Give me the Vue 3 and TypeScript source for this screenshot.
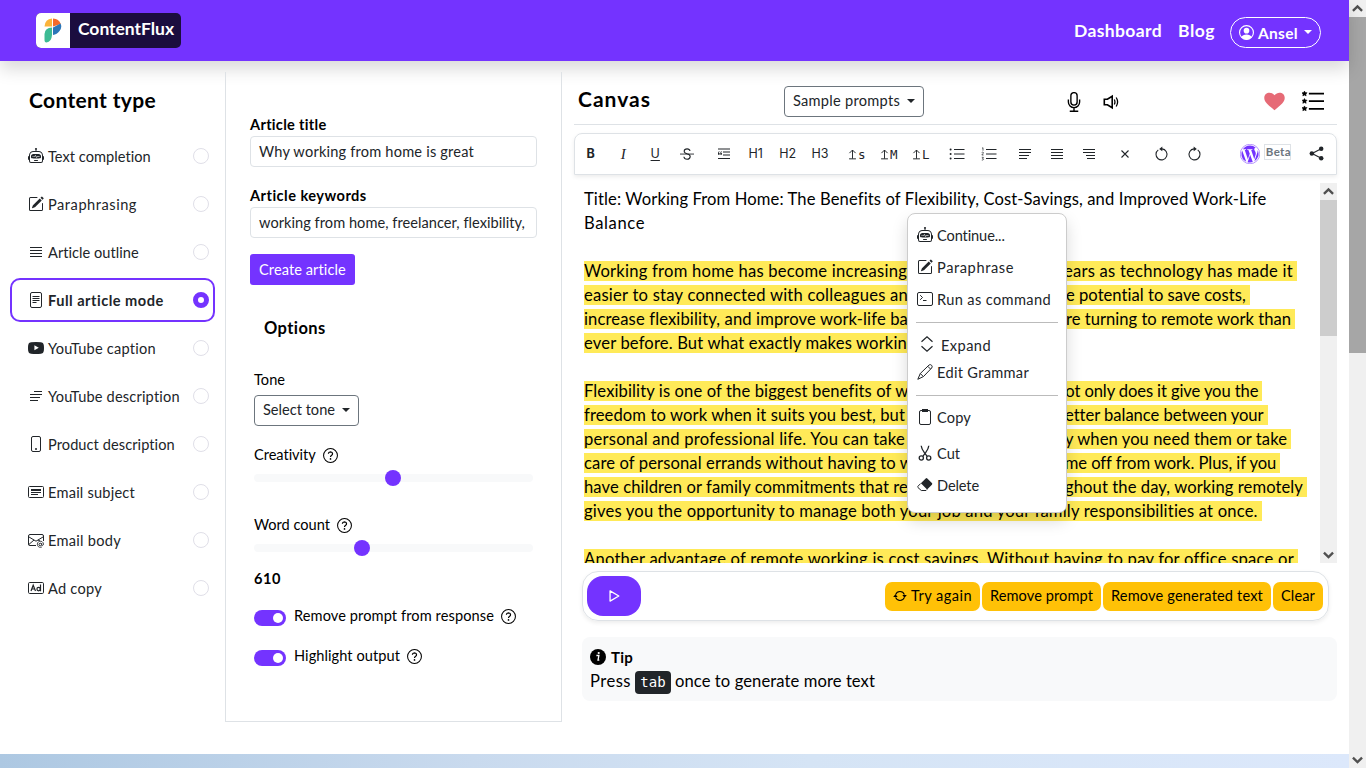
<script setup lang="ts">
import { h } from 'vue'
import type { Directive, FunctionalComponent } from 'vue'

/* Inner markup of every 16-unit icon. */
const icons: Record<string, string> = {
  robot:
    '<path d="M6 12.5a.5.5 0 0 1 .5-.5h3a.5.5 0 0 1 0 1h-3a.5.5 0 0 1-.5-.5ZM3 8.062C3 6.76 4.235 5.765 5.53 5.886a26.58 26.58 0 0 0 4.94 0C11.765 5.765 13 6.76 13 8.062v1.157a.933.933 0 0 1-.765.935c-.845.147-2.34.346-4.235.346-1.895 0-3.39-.2-4.235-.346A.933.933 0 0 1 3 9.219V8.062Zm4.542-.827a.25.25 0 0 0-.217.068l-.92.9a24.767 24.767 0 0 1-1.871-.183.25.25 0 0 0-.068.495c.55.076 1.232.149 2.02.193a.25.25 0 0 0 .189-.071l.754-.736.847 1.71a.25.25 0 0 0 .404.062l.932-.97a25.286 25.286 0 0 0 1.922-.188.25.25 0 0 0-.068-.495c-.538.074-1.207.145-1.98.189a.25.25 0 0 0-.166.076l-.754.785-.842-1.7a.25.25 0 0 0-.182-.135Z"/><path d="M8.5 1.866a1 1 0 1 0-1 0V3h-2A4.5 4.5 0 0 0 1 7.5V8a1 1 0 0 0-1 1v2a1 1 0 0 0 1 1v1a2 2 0 0 0 2 2h10a2 2 0 0 0 2-2v-1a1 1 0 0 0 1-1V9a1 1 0 0 0-1-1v-.5A4.5 4.5 0 0 0 10.5 3h-2V1.866ZM14 7.5V13a1 1 0 0 1-1 1H3a1 1 0 0 1-1-1V7.5A3.5 3.5 0 0 1 5.5 4h5A3.5 3.5 0 0 1 14 7.5Z"/>',
  edit:
    '<path d="M15.502 1.94a.5.5 0 0 1 0 .706L14.459 3.69l-2-2L13.502.646a.5.5 0 0 1 .707 0l1.293 1.293zm-1.75 2.456-2-2L4.939 9.21a.5.5 0 0 0-.121.196l-.805 2.414a.25.25 0 0 0 .316.316l2.414-.805a.5.5 0 0 0 .196-.12l6.813-6.814z"/><path d="M1 13.5A1.5 1.5 0 0 0 2.5 15h11a1.5 1.5 0 0 0 1.5-1.5v-6a.5.5 0 0 0-1 0v6a.5.5 0 0 1-.5.5h-11a.5.5 0 0 1-.5-.5v-11a.5.5 0 0 1 .5-.5H9a.5.5 0 0 0 0-1H2.5A1.5 1.5 0 0 0 1 2.5v11z"/>',
  justify: '<path d="M2 3h12v1H2zM2 6h12v1H2zM2 9h12v1H2zM2 12h12v1H2z"/>',
  left: '<path d="M2 3h12v1H2zM2 6h12v1H2zM2 9h10v1H2zM2 12h8v1H2z"/>',
  right: '<path d="M2 3h12v1H2zM2 6h12v1H2zM5 9h9v1H5zM6 12h8v1H6z"/>',
  para: '<path d="M6 3h8v1H6zM2 6h12v1H2zM2 9h10v1H2zM2 12h8v1H2z"/>',
  file:
    '<rect x="2.5" y=".5" width="11" height="15" rx="1.5" fill="none" stroke="currentColor"/><path d="M4.5 4h7v1h-7zM4.5 6h7v1h-7zM4.5 8h7v1h-7zM4.5 10h4v1h-4z"/>',
  youtube:
    '<path fill-rule="evenodd" d="M3 2.2Q8 1.7 13 2.2Q15.6 2.4 15.8 5Q16.2 8 15.8 11Q15.6 13.6 13 13.8Q8 14.3 3 13.8Q.4 13.6.2 11Q-.2 8 .2 5Q.4 2.4 3 2.2ZM6.4 5.2v5.1L10.8 7.8Z"/>',
  phone: '<rect x="3.5" y=".5" width="9" height="15" rx="1.5" fill="none" stroke="currentColor"/><circle cx="8" cy="13" r="1"/>',
  card: '<rect x=".5" y="2.5" width="15" height="11" rx="1" fill="none" stroke="currentColor"/><path d="M3 5h10v2H3zM3 8h10v1H3zM3 10h7v1H3z"/>',
  mail:
    '<g fill="none" stroke="currentColor"><path d="M8 13.5H2A1.5 1.5 0 0 1 .5 12V4A1.5 1.5 0 0 1 2 2.5h12A1.5 1.5 0 0 1 15.5 4v5M.5 4.7L8 9.2l7.5-4.5M.5 12.8L6 8M10 8l2 1"/><circle cx="12.3" cy="12.5" r="1.3"/><path d="M13.7 11v1.6q.1 1.2 1 .9q.8-.4.8-1.5a3.1 3.1 0 1 0-1.6 3" stroke-width=".8"/></g>',
  ad: '<rect x=".5" y="2.5" width="15" height="11" rx="1.2" fill="none" stroke="currentColor"/><g fill="none" stroke="currentColor" stroke-width="1.2"><path d="M3 11L5.2 5.2L7.5 11M3.7 9h3"/><circle cx="10.6" cy="9.1" r="1.7"/><path d="M12.5 4.5V11.3"/></g>',
  help:
    '<circle cx="8" cy="8" r="7.4" fill="none" stroke="currentColor" stroke-width="1.1"/><path d="M5.7 6.1Q5.8 4.2 8 4.1Q10.2 4.2 10.2 6Q10.2 7 8.9 7.9Q8 8.5 8 9.7" fill="none" stroke="currentColor" stroke-width="1.3"/><circle cx="8" cy="11.6" r=".9"/>',
  person:
    '<circle cx="8" cy="8" r="7.4" fill="none" stroke="currentColor" stroke-width="1.2"/><circle cx="8" cy="6" r="3"/><path d="M2.4 13Q4 10 8 10T13.6 13Q11 15.6 8 15.6T2.4 13Z"/>',
  mic: '<g fill="none" stroke="currentColor" stroke-width="1.1"><rect x="5.5" y=".5" width="5" height="10" rx="2.5"/><path d="M3.500 6v2a4.500 4.500 0 0 0 9 0V6M8 12.500v3M4.600 15.400h6.800"/></g>',
  sound: '<g fill="none" stroke="currentColor" stroke-width="1.6"><path d="M1.300 5.200h3.100L9.200 2.200v11.600L4.400 10.800H1.300z"/><path d="M11.300 5.500Q12.600 8 11.300 10.500M13.200 3.500Q16 8 13.200 12.500" stroke-width="1.300"/></g>',
  heart: '<path d="M8 14.600C6 12.600.2 9.300.2 5.300C.2 1 5.500-.1 8 3.300C10.500-.1 15.800 1 15.800 5.300C15.800 9.300 10 12.600 8 14.600Z"/>',
  starlist:
    '<path d="M5 2h11v1.300H5zM5 7.500h11v1.300H5zM5 13h11v1.300H5z"/><path d="M1.800.8l.6 1.1 1.300.1-.9 1 .2 1.300-1.200-.6-1.200.6.2-1.300-.9-1 1.300-.1zM1.800 6.200l.6 1.100 1.300.1-.9 1 .2 1.300-1.200-.6-1.200.6.2-1.300-.9-1 1.300-.1zM1.800 11.600l.6 1.100 1.300.1-.9 1 .2 1.300-1.200-.6-1.200.6.2-1.300-.9-1 1.300-.1z" stroke="currentColor" stroke-width=".4"/>',
  quote: '<path d="M2 2.500h12v1H2zM7 5.500h7v1H7zM7 8.500h7v1H7zM2 12h12v1H2z"/><path d="M2 8.800V7q.1-1.600 1.500-1.700v.7q-.7.1-.7 1h.8v1.800zM4.300 8.800V7q.1-1.600 1.500-1.700v.7q-.7.1-.7 1h.8v1.800z"/>',
  ul: '<path d="M5 3h10.500v1H5zM5 7.500h10.500v1H5zM5 12h10.500v1H5z"/><circle cx="1.600" cy="3.500" r="1"/><circle cx="1.600" cy="8" r="1"/><circle cx="1.600" cy="12.500" r="1"/>',
  ol: '<path d="M5 3h10.500v1H5zM5 7.500h10.500v1H5zM5 12h10.500v1H5z"/><path d="M1 2.300l1-.6v3M.7 6.500q1.400-1 1.700.1Q2.400 7.300.8 9h1.800M.8 11.300h1.600l-.9 1.100q1 0 1 .9t-1.700.8" fill="none" stroke="currentColor" stroke-width=".7"/>',
  close: '<path d="M4.500 4.500l7 7M11.500 4.500l-7 7" stroke="currentColor" stroke-width="1.100"/>',
  undo: '<path d="M4.300 3.900A5.500 5.500 0 1 0 8 2.900" fill="none" stroke="currentColor" stroke-width="1.100"/><path d="M8.300.5v4.800L5.200 2.900z"/>',
  redo: '<path d="M11.700 3.900A5.500 5.500 0 1 1 8 2.900" fill="none" stroke="currentColor" stroke-width="1.100"/><path d="M7.700.5v4.800L10.800 2.900z"/>',
  strike: '<path d="M1 7.600h14v.9H1z"/><path d="M11 5Q10.700 2.900 8.100 2.900Q5.300 2.900 5.200 5.200Q5.200 6.900 8 7.700Q11.200 8.500 11.200 10.600Q11 13.200 8.100 13.200Q5.200 13.200 4.900 10.700" fill="none" stroke="currentColor" stroke-width="1.100"/>',
  rise: '<path d="M8 1.500V14M3.500 6L8 1.500L12.500 6M3 14.300h10" fill="none" stroke="currentColor" stroke-width="1.400"/>',
  share: '<path d="M13 3L3.300 8L13 13" fill="none" stroke="currentColor" stroke-width="1.200"/><circle cx="13" cy="3" r="2.400"/><circle cx="3" cy="8" r="2.400"/><circle cx="13" cy="13" r="2.400"/>',
  wordpress:
    '<path d="M12.633 7.653c0-.848-.305-1.435-.566-1.892l-.08-.13c-.317-.51-.594-.958-.594-1.48 0-.63.478-1.218 1.152-1.218.02 0 .039.002.058.003l.031.003A6.838 6.838 0 0 0 8 1.137 6.855 6.855 0 0 0 2.266 4.23c.16.005.313.009.442.009.717 0 1.828-.087 1.828-.087.37-.022.414.521.044.565 0 0-.371.044-.785.065l2.5 7.434 1.5-4.506-1.07-2.929c-.369-.022-.719-.065-.719-.065-.37-.022-.326-.588.043-.566 0 0 1.134.087 1.808.087.718 0 1.830-.087 1.830-.087.370-.022.413.522.043.566 0 0-.372.043-.785.065l2.480 7.377.684-2.287.054-.173c.270-.860.469-1.495.469-2.046zM1.137 8a6.864 6.864 0 0 0 3.868 6.176L1.730 5.206A6.837 6.837 0 0 0 1.137 8z"/><path d="M6.061 14.583 8.121 8.600l2.109 5.780c.014.033.030.064.049.094a6.854 6.854 0 0 1-4.218.109zm7.960-9.876c.030.219.047.453.047.706 0 .696-.130 1.479-.522 2.458l-2.096 6.060a6.860 6.860 0 0 0 2.572-9.224z"/><circle cx="8" cy="8" r="7.800" fill="none" stroke="currentColor" stroke-width=".4"/>',
  terminal:
    '<rect x=".5" y="1.500" width="15" height="13" rx="1.500" fill="none" stroke="currentColor"/><path d="M3.200 4.200l2.300 2.300l-2.300 2.300M6 9.500h3.500" fill="none" stroke="currentColor"/>',
  expand: '<path d="M2.500 5.800L8 .8l5.500 5M2.500 10.200L8 15.200l5.500-5" fill="none" stroke="currentColor" stroke-width="1.200"/>',
  pen: '<path d="M12.200.9q1.500-.7 2.500.5t0 2.600L6.500 12.500L.8 15.300L3.300 9.500ZM10.800 2.300L13.500 5M3.300 9.500L6.300 12.500" fill="none" stroke="currentColor"/>',
  clipboard: '<rect x="2.500" y="1.500" width="11" height="14" rx="1.500" fill="none" stroke="currentColor"/><path d="M5 0h6v3H5z"/>',
  cut: '<g fill="none" stroke="currentColor" stroke-width="1.300"><path d="M4.200.8Q4.500 4 7.500 7.800L10.200 11.300M11.800.8Q11.500 4 8.500 7.800L5.800 11.300"/><circle cx="4.300" cy="13" r="2.100"/><circle cx="11.700" cy="13" r="2.100"/></g>',
  eraser: '<path d="M8.700 1.500Q9.500.7 10.300 1.500L14.900 6Q15.700 6.800 14.900 7.700L10.100 12.400L3.900 6.300Z"/><path d="M3.700 6.500L1 9.200Q.4 9.900 1 10.600L4.300 13.500H9L10 12.500" fill="none" stroke="currentColor"/>',
  refresh:
    '<path d="M3 6.500A5.300 5.300 0 0 1 13 6.500M13 9.500A5.300 5.300 0 0 1 3 9.500" fill="none" stroke="currentColor" stroke-width="1.200"/><path d="M10.600 6.800h5.200L13.200 10zM5.400 9.200H.2L2.800 6z"/>',
  play: '<path d="M3.500 2.200v11.600L13.500 8z" fill="none" stroke="currentColor" stroke-width="1.500" stroke-linejoin="round"/>',
  info: '<circle cx="8" cy="8" r="8"/><path d="M6.400 6.500h2.500L8 11.200h1.300" fill="none" stroke="#fff" stroke-width="1.300"/><circle cx="8.700" cy="4" r="1.100" fill="#fff"/>',
  caretUp: '<path d="M3.700 10.200L8 6l4.300 4.200" fill="none" stroke="currentColor" stroke-width="2.200"/>',
  caretDown: '<path d="M3.700 6.200L8 10.400l4.300-4.200" fill="none" stroke="currentColor" stroke-width="2.200"/>',
}

const Icon: FunctionalComponent<{ name: string; size?: number }> = (p) =>
  h('svg', {
    width: p.size ?? 16,
    height: p.size ?? 16,
    viewBox: '0 0 16 16',
    fill: 'currentColor',
    style: 'flex:none;display:block',
    innerHTML: icons[p.name],
  })
Icon.props = ['name', 'size']

/* Tracks a label so that it occupies the given width in pixels. */
const vFit: Directive<HTMLElement, number> = {
  mounted(el, { value }) {
    if (!value) return
    const natural = el.getBoundingClientRect().width
    const count = (el.textContent ?? '').length
    el.style.letterSpacing = `${(value - natural) / count}px`
  },
}

interface TypeRow { icon: string; label: string; w: number; active?: boolean }
const types: TypeRow[] = [
  { icon: 'robot', label: 'Text completion', w: 103 },
  { icon: 'edit', label: 'Paraphrasing', w: 89 },
  { icon: 'justify', label: 'Article outline', w: 91 },
  { icon: 'file', label: 'Full article mode', w: 116, active: true },
  { icon: 'youtube', label: 'YouTube caption', w: 108 },
  { icon: 'para', label: 'YouTube description', w: 132 },
  { icon: 'phone', label: 'Product description', w: 127 },
  { icon: 'card', label: 'Email subject', w: 87 },
  { icon: 'mail', label: 'Email body', w: 73 },
  { icon: 'ad', label: 'Ad copy', w: 54 },
]

interface Tool { icon?: string; text?: string; cls?: string; rise?: boolean }
const tools: Tool[][] = [
  [{ text: 'B', cls: 'b' }, { text: 'I', cls: 'i' }, { text: 'U', cls: 'u' }, { icon: 'strike' }],
  [{ icon: 'quote' }, { text: 'H1' }, { text: 'H2' }, { text: 'H3' }],
  [{ text: 's', cls: 'm', rise: true }, { text: 'M', cls: 'm', rise: true }, { text: 'L', cls: 'm', rise: true }],
  [{ icon: 'ul' }, { icon: 'ol' }],
  [{ icon: 'left' }, { icon: 'justify' }, { icon: 'right' }],
  [{ icon: 'close' }],
  [{ icon: 'undo' }, { icon: 'redo' }],
]

type Seg = [string, number]
const paragraphs: Seg[][][] = [
  [
    [['Working from home has become increasing', 323], ['ly popular in recent y', 157], ['ears as technology has made it', 229]],
    [['easier to stay connected with colleagues an', 324], ['d clients. With th', 158], ['e potential to save costs,', 180]],
    [['increase flexibility, and improve work-life ba', 324], ['lance, people a', 158], ['re turning to remote work than', 225]],
    [['ever before. But what exactly makes workin', 323], ['g remotely great?', 130]],
  ],
  [
    [['Flexibility is one of the biggest benefits of w', 324], ['orking at home. N', 157], ['ot only does it give you the', 193]],
    [['freedom to work when it suits you best, but', 321], [' it also gives a b', 160], ['etter balance between your', 198]],
    [['personal and professional life. You can take', 321], [' breaks in the da', 160], ['y when you need them or take', 222]],
    [['care of personal errands without having to w', 329], ['orry about ti', 152], ['me off from work. Plus, if you', 211]],
    [['have children or family commitments that re', 324], ['quire care throu', 157], ['ghout the day, working remotely', 238]],
    [['gives you the opportunity to manage both your job and your family responsibilities at once.', 674]],
  ],
  [[['Another advantage of remote working is cost savings. Without having to pay for office space or', 709]]],
]

const menu: { icon: string; label: string; w: number; cls: string }[][] = [
  [
    { icon: 'robot', label: 'Continue...', w: 68, cls: '' },
    { icon: 'edit', label: 'Paraphrase', w: 77, cls: '' },
    { icon: 'terminal', label: 'Run as command', w: 114, cls: '' },
  ],
  [
    { icon: 'expand', label: 'Expand', w: 50, cls: 'expand' },
    { icon: 'pen', label: 'Edit Grammar', w: 92, cls: 'grammar' },
  ],
  [
    { icon: 'clipboard', label: 'Copy', w: 34, cls: 'copy' },
    { icon: 'cut', label: 'Cut', w: 23, cls: '' },
    { icon: 'eraser', label: 'Delete', w: 42, cls: '' },
  ],
]

const actions = [
  { label: 'Try again', w: 61, icon: true },
  { label: 'Remove prompt', w: 103 },
  { label: 'Remove generated text', w: 152 },
  { label: 'Clear', w: 34 },
]
const creativity = 49.8
const words = 38.7
</script>

<template>
  <div class="screen">
    <div class="page">
      <header class="top">
        <div class="brand">
          <div class="mark">
            <svg width="18" height="25" viewBox="0 0 18 25">
              <path d="M.5 8.500Q1 1 8 .5V8.500Z" fill="#fbb43b" />
              <path d="M9 .5Q15 .8 16.800 6L9 8.500Z" fill="#f26a2c" />
              <path d="M10 9L16.500 5.500Q18.500 9 15.500 13Q13 16.500 9 17V9.500Z" fill="#2b76b8" />
              <path d="M8 9.500V17Q7.500 24 2.500 24.500Q.3 24.500.5 21V16Q1 9.500 8 9.500Z" fill="#3dbb94" />
            </svg>
          </div>
          <div class="name"><span v-fit="96">ContentFlux</span></div>
        </div>
        <nav class="nav">
          <span v-fit="88">Dashboard</span>
          <span v-fit="37" class="blog">Blog</span>
          <button class="user">
            <Icon name="person" :size="15" /><span v-fit="40">Ansel</span><i class="caret" />
          </button>
        </nav>
      </header>

      <main class="body">
        <aside class="side">
          <h2><span v-fit="127">Content type</span></h2>
          <div v-for="t in types" :key="t.label" class="row" :class="{ active: t.active }">
            <Icon :name="t.icon" />
            <span class="lbl"><span v-fit="t.w">{{ t.label }}</span></span>
            <i class="radio" />
          </div>
        </aside>

        <section class="form">
          <label><span v-fit="77">Article title</span></label>
          <div class="input"><span v-fit="215">Why working from home is great</span></div>
          <label class="second"><span v-fit="117">Article keywords</span></label>
          <div class="input"><span v-fit="266">working from home, freelancer, flexibility,</span></div>
          <button class="create"><span v-fit="87">Create article</span></button>
          <div class="opts">
            <h3><span v-fit="62">Options</span></h3>
            <div class="line tone"><span v-fit="31">Tone</span></div>
            <button class="select"><span v-fit="72">Select tone</span><i class="caret" /></button>
            <div class="line creat"><span v-fit="62">Creativity</span><Icon name="help" :size="15" /></div>
            <div class="slider"><i :style="{ left: creativity + '%' }" /></div>
            <div class="line count"><span v-fit="76">Word count</span><Icon name="help" :size="15" /></div>
            <div class="slider"><i :style="{ left: words + '%' }" /></div>
            <div class="line num"><span v-fit="27">610</span></div>
            <div class="line check"><i class="switch" /><span v-fit="200">Remove prompt from response</span><Icon name="help" :size="15" /></div>
            <div class="line check"><i class="switch" /><span v-fit="106">Highlight output</span><Icon name="help" :size="15" /></div>
          </div>
        </section>

        <section class="canvas">
          <div class="chead">
            <h2><span v-fit="73">Canvas</span></h2>
            <button class="select prompts"><span v-fit="107">Sample prompts</span><i class="caret" /></button>
            <Icon class="mic" name="mic" :size="20" />
            <Icon class="snd" name="sound" />
            <Icon class="heart" name="heart" :size="21" />
            <Icon class="stars" name="starlist" :size="22" />
          </div>

          <div class="toolbar">
            <div v-for="(g, gi) in tools" :key="gi" class="group">
              <span v-for="(t, ti) in g" :key="ti" class="tool" :class="t.cls">
                <Icon v-if="t.icon" :name="t.icon" />
                <template v-else><Icon v-if="t.rise" name="rise" :size="11" />{{ t.text }}</template>
              </span>
            </div>
            <Icon class="wp" name="wordpress" :size="20" />
            <span class="beta"><span v-fit="25">Beta</span></span>
            <Icon class="share" name="share" :size="15" />
          </div>

          <div class="editor">
            <div class="text">
              <div class="ln"><span v-fit="682">Title: Working From Home: The Benefits of Flexibility, Cost-Savings, and Improved Work-Life</span></div>
              <div class="ln"><span v-fit="61">Balance</span></div>
              <div v-for="(p, pi) in paragraphs" :key="pi" class="para">
                <div v-for="(l, li) in p" :key="li" class="ln">
                  <mark><span v-for="(s, si) in l" :key="si" v-fit="s[1]">{{ s[0] }}</span></mark>
                </div>
              </div>
            </div>
            <div class="bar">
              <Icon name="caretUp" :size="17" />
              <i class="thumb" />
              <Icon name="caretDown" :size="17" />
            </div>
          </div>

          <div class="run">
            <button class="play"><Icon name="play" :size="14" /></button>
            <div class="acts">
              <button v-for="a in actions" :key="a.label">
                <Icon v-if="a.icon" name="refresh" :size="14" /><span v-fit="a.w">{{ a.label }}</span>
              </button>
            </div>
          </div>

          <div class="tip">
            <div class="tiphead"><Icon name="info" /><span v-fit="22">Tip</span></div>
            <div class="tipline"><span v-fit="41">Press</span><kbd>tab</kbd><span v-fit="200">once to generate more text</span></div>
          </div>
        </section>
      </main>
      <div class="strip" />

      <div class="menu">
        <div v-for="(g, gi) in menu" :key="gi" class="mgroup">
          <div v-for="m in g" :key="m.label" class="item" :class="m.cls">
            <Icon :name="m.icon" /><span class="mt"><span v-fit="m.w">{{ m.label }}</span></span>
          </div>
        </div>
      </div>
    </div>

    <div class="pagebar">
      <Icon name="caretUp" :size="17" />
      <i class="thumb" />
      <Icon name="caretDown" :size="17" />
    </div>
  </div>
</template>

<style>
html, body { margin: 0; background: #fff; overflow: hidden; }
</style>

<style scoped>
.screen { display: flex; width: 1366px; height: 768px; overflow: hidden; font: 14.6px/20px Lato, "Open Sans", sans-serif; color: #000; background: #fff; }
.screen *, .screen *::before { box-sizing: border-box; }
button { font: inherit; margin: 0; padding: 0; border: 0; background: none; color: #212529; display: flex; align-items: center; white-space: nowrap; }
span { white-space: pre; }
h2, h3 { margin: 0; font-weight: 700; color: #000; }
h2 { font-size: 21px; line-height: 24px; }
.page { position: relative; width: 1349px; height: 768px; display: flex; flex-direction: column; }
.caret { border: 4px solid transparent; border-top-color: currentColor; border-bottom: 0; }

.top { flex: none; height: 61px; background: #7433ff; box-shadow: 0 8px 16px rgba(0, 0, 0, .15); display: flex; justify-content: space-between; padding: 13px 28px 0 36px; }
.brand { display: flex; width: 145px; height: 35px; border-radius: 5px; overflow: hidden; background: #1b0d3f; }
.mark { width: 34px; background: #fff; display: flex; align-items: center; justify-content: center; }
.name { padding: 6px 0 0 8px; color: #fff; font-weight: 700; font-size: 17.5px; line-height: 20px; }
.nav { display: flex; height: 36px; align-items: center; color: #fff; font-weight: 700; font-size: 17.5px; }
.blog { margin: 0 15px 0 16px; }
.user { width: 91px; height: 31px; margin-top: 3px; border: 1px solid #fff; border-radius: 16px; color: #fff; font-weight: 700; font-size: 15.5px; padding-left: 8px; gap: 4px; }
.user .caret { margin: -2px 0 0 2px; }

.body { display: flex; height: 661px; }
.side { width: 225px; padding: 27px 10px 0; }
.side h2 { padding-left: 19px; margin-bottom: 22px; }
.row { display: flex; align-items: center; width: 205px; height: 44px; margin-bottom: 4px; border: 2px solid transparent; border-radius: 10px; padding: 0 4px 0 16px; color: #212529; }
.row.active { border-color: #7433ff; font-weight: 700; }
.lbl { flex: 1; padding: 1px 0 0 4px; }
.radio { width: 16px; height: 16px; border: 1px solid #e0dfe8; border-radius: 50%; }
.active .radio { border: 5px solid #7433ff; background: #fff; }

.form { width: 337px; height: 650px; margin-top: 11px; border: 1px solid #dee2e6; border-top: 0; padding: 44px 24px 0; }
.form label { display: block; font-weight: 700; height: 20px; }
.form .second { margin-top: 20px; }
.form .second, .form label { line-height: 18px; }
.input { height: 31px; border: 1px solid #dee2e6; border-radius: 4px; padding: 5px 8px; line-height: 20px; color: #212529; width: 287px; }
.create { margin-top: 16px; height: 31px; width: 105px; background: #7433ff; color: #fff; border-radius: 3px; padding-left: 9px; }
.opts { padding-left: 4px; }
.opts h3 { font-size: 16.5px; line-height: 20px; margin: 33px 0 0 10px; }
.line { display: flex; align-items: center; height: 20px; gap: 7px; }
.line.tone { margin-top: 32px; }
.select { height: 31px; width: 105px; border: 1px solid #6c757d; border-radius: 4px; padding-left: 8px; gap: 7px; margin-top: 5px; padding-bottom: 1px; }
.line.creat { margin-top: 19px; }
.slider { position: relative; width: 279px; height: 8px; border-radius: 4px; background: #f8f9fa; margin-top: 9px; }
.slider i { position: absolute; top: -4px; width: 16px; height: 16px; margin-left: -8px; border-radius: 50%; background: #7433ff; }
.line.count { margin-top: 33px; }
.line.num { margin-top: 17px; font-weight: 700; }
.line.check { margin-top: 17px; margin-bottom: 20px; }
.line.check + .line.check { margin-top: 0; }
.switch { width: 32px; height: 16px; border-radius: 8px; background: #7433ff; margin: 3px 1px 0 0; padding: 3px; display: flex; justify-content: flex-end; }
.switch::before { content: ""; width: 10px; height: 10px; border-radius: 50%; background: #fff; }

.canvas { width: 763px; margin-left: 12px; }
.chead { display: flex; align-items: center; height: 64px; border-bottom: 1px solid #dee2e6; padding: 18px 13px 0 4px; }
.chead h2 { width: 206px; margin-top: -6px; }
.prompts { width: 140px; margin: 0; }
.mic { margin-left: 140px; }
.snd { margin-left: 19px; }
.heart { margin-left: auto; color: #e66a76; }
.stars { margin: -2px 0 0 17px; }
.toolbar { height: 42px; margin-top: 8px; border: 1px solid #dee2e6; border-radius: 8px 8px 0 0; box-shadow: 0 2px 4px rgba(0, 0, 0, .075); display: flex; align-items: center; gap: 4.2px; color: #212529; }
.group { display: flex; }
.tool { width: 32.1px; height: 20px; display: flex; align-items: center; justify-content: center; font: 12.500px/20px Inter, sans-serif; }
.group:first-child .tool:first-child { padding-right: 1px; }
.b { font-weight: 700; }
.i { font: italic 15px/20px "Liberation Serif", serif; }
.u { text-decoration: underline; text-underline-offset: 2px; }
.m { font: 12.500px/20px "DejaVu Sans Mono", monospace; padding-top: 1px; }
.wp { margin-left: auto; color: #7433ff; }
.beta { border: 1px solid #dee2e6; height: 16px; margin: -4px 14px 0 0; padding: 0 0 0 1px; font-weight: 700; font-size: 11.500px; line-height: 14px; color: #6c757d; width: 27px; }
.share { margin: -2px 12px 0 0; }
.editor { margin-top: 8px; height: 380px; display: flex; overflow: hidden; }
.text { width: 746px; padding: 4px 0 0 10px; font-size: 16.600px; }
.ln { height: 24px; line-height: 24px; display: flex; align-items: center; }
.para { margin-top: 24px; }
mark { display: flex; height: 20px; line-height: 20px; background: #ffea58; color: #000; padding-right: 4px; }
.bar { width: 17px; background: #f0f0f0; display: flex; flex-direction: column; color: #505050; }
.bar .thumb { height: 136px; background: #cdcdcd; margin-bottom: auto; }
.run { width: 747px; height: 50px; margin: 8px 0 0 8px; border: 1px solid #dee2e6; border-radius: 16px; box-shadow: 0 2px 4px rgba(0, 0, 0, .075); display: flex; align-items: center; justify-content: space-between; padding: 0 5px 0 4px; }
.play { width: 54px; height: 40px; border-radius: 16px; background: #7433ff; color: #fff; justify-content: center; }
.acts { display: flex; gap: 2px; }
.acts button { height: 29px; padding: 0 8px; border-radius: 7px; background: #ffc107; color: #000; gap: 4px; }
.tip { width: 755px; height: 64px; margin: 16px 0 0 8px; border-radius: 8px; background: #f8f9fa; padding: 11px 8px 0; }
.tiphead { display: flex; align-items: center; height: 20px; gap: 5px; font-weight: 700; font-size: 15px; margin-top: -1px; }
.tipline { display: flex; align-items: center; height: 24px; margin-top: 2px; font-size: 16.600px; }
kbd { width: 36px; height: 23px; margin: 2px 4px 0; border-radius: 4px; background: #212529; color: #fff; font: 14px/22px "DejaVu Sans Mono", monospace; text-align: center; }
.strip { height: 14px; margin-top: auto; background: linear-gradient(90deg, #adc8e2, #c9daee 35%, #d5e4f5 60%, #dce8fb); }

.menu { position: absolute; left: 907px; top: 213px; width: 160px; height: 300px; border: 1px solid #ccc; border-radius: 8px; background: #fff; box-shadow: 0 8px 16px rgba(0, 0, 0, .15); padding: 6px 8px; color: #212529; }
.mgroup + .mgroup { border-top: 1px solid #bbb; }
.mgroup:first-child { height: 102px; margin-top: -1px; padding-bottom: 1px; }
.mgroup:nth-child(2) { height: 73px; margin-top: 1px; padding-top: 11px; }
.mgroup:nth-child(3) { padding-top: 5px; }
.item { display: flex; align-items: center; height: 32px; padding-left: 1px; }
.mt { padding: 1px 0 0 4px; }
.item.expand { height: 20px; padding-left: 3px; }
.item.expand .mt { padding: 4px 0 0 6px; }
.item.grammar { height: 36px; }
.item.copy { height: 32px; margin-bottom: 4px; }

.pagebar { width: 17px; height: 768px; background: #f0f0f0; display: flex; flex-direction: column; color: #505050; }
.pagebar .thumb { height: 336px; background: #a6a6a6; margin-bottom: auto; }
</style>
